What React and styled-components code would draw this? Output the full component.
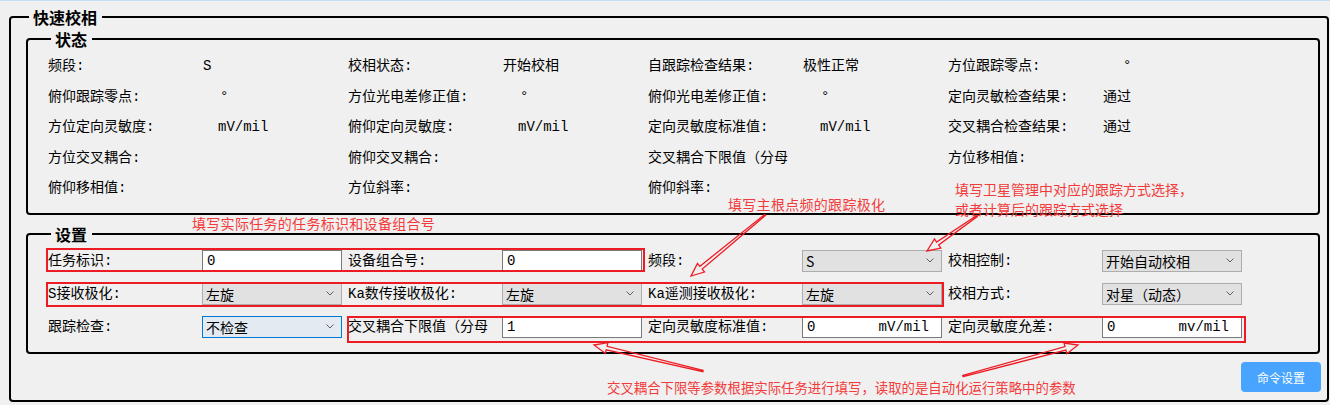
import React from 'react';
import styled, { createGlobalStyle } from 'styled-components';

const Global = createGlobalStyle`
  html, body { margin: 0; padding: 0; background: #f0f0f0; }
  body {
    font-family: "Liberation Mono", "Noto Sans CJK SC", monospace;
    font-size: 14px;
    color: #000;
  }
  * { box-sizing: border-box; }
`;

const Page = styled.div`
  position: relative;
  width: 1330px;
  height: 405px;
  overflow: hidden;
  background: #f0f0f0;
`;

const TopStrip = styled.div`
  height: 1px;
  background: #c6def3;
`;

const Group = styled.fieldset`
  margin: ${(p) => p.$margin || '0'};
  padding: ${(p) => p.$padding || '0'};
  width: ${(p) => (p.$width ? `${p.$width}px` : 'auto')};
  border: 2px solid #000;
  border-radius: 4px;
  min-width: 0;
`;

const Title = styled.legend`
  margin-left: 3px;
  padding: 0 5px 0 4px;
  font-family: "Noto Sans CJK SC", sans-serif;
  font-weight: 700;
  font-size: 16px;
  line-height: 18px;
`;

const StatusGrid = styled.div`
  display: grid;
  grid-template-columns: repeat(4, 155px 145px);
  grid-auto-rows: 30.5px;
  align-items: center;
`;

const StatusLabel = styled.span`
  white-space: pre;
  line-height: 18px;
`;

const StatusValue = styled.span`
  white-space: pre;
  line-height: 18px;
  padding-left: ${(p) => p.$indent || 0}px;
`;

const SettingsGrid = styled.div`
  display: grid;
  grid-template-columns: repeat(4, 154px 146px);
  grid-template-rows: repeat(3, 33px);
  align-items: center;
`;

const FieldLabel = styled.span`
  grid-column: ${(p) => p.$c};
  grid-row: ${(p) => p.$r};
  white-space: pre;
  line-height: 18px;
`;

const SelectBox = styled.div`
  grid-column: ${(p) => p.$c};
  grid-row: ${(p) => p.$r};
  width: 140px;
  height: 22px;
  display: flex;
  align-items: center;
  justify-content: space-between;
  padding: 0 7px 0 3px;
  background: ${(p) => (p.$focused ? '#e3eaf2' : '#e1e1e1')};
  border: 1px solid ${(p) => (p.$focused ? '#0078d7' : '#adadad')};
  font-family: "Noto Sans CJK SC", sans-serif;
  font-size: 14px;
  line-height: 20px;
  white-space: pre;
`;

const TextBox = styled.div`
  grid-column: ${(p) => p.$c};
  grid-row: ${(p) => p.$r};
  width: 140px;
  height: 22px;
  display: flex;
  align-items: center;
  justify-content: space-between;
  padding: 0 12px 0 4px;
  background: #fff;
  border: 1px solid #7a7a7a;
  line-height: 18px;
  white-space: pre;
`;

const Highlight = styled.div`
  grid-column: ${(p) => p.$cols};
  grid-row: ${(p) => p.$r};
  align-self: stretch;
  margin: ${(p) => p.$m};
  border: 2px solid #ed1c24;
  pointer-events: none;
  z-index: 1;
`;

const Footer = styled.div`
  display: flex;
  justify-content: flex-end;
  margin-top: 8px;
`;

const CommandButton = styled.button`
  width: 80px;
  height: 30px;
  margin-right: -1px;
  border: none;
  border-radius: 4px;
  background: #48a4fe;
  color: #fff;
  font-family: "Noto Sans CJK SC", sans-serif;
  font-size: 12px;
  padding: 0;
`;

const Overlay = styled.div`
  position: absolute;
  inset: 0;
  pointer-events: none;
`;

const ArrowLayer = styled.svg`
  position: absolute;
  left: 0;
  top: 0;
`;

const Note = styled.div`
  position: absolute;
  left: ${(p) => p.$x}px;
  top: ${(p) => p.$y}px;
  font-family: "Noto Sans CJK SC", sans-serif;
  font-size: ${(p) => p.$size || 14}px;
  letter-spacing: ${(p) => p.$ls || 0}px;
  line-height: ${(p) => p.$lh || 16}px;
  color: #f23c3c;
  white-space: pre;
`;

const Chevron = () => (
  <svg width="8" height="5" viewBox="0 0 8 5">
    <polyline points="0.5,0.5 4,4 7.5,0.5" fill="none" stroke="#606060" strokeWidth="1" />
  </svg>
);

const statusRows = [
  [['频段:', 'S', 0], ['校相状态:', '开始校相', 0], ['自跟踪检查结果:', '极性正常', 0], ['方位跟踪零点:', '°', 20]],
  [['俯仰跟踪零点:', '°', 17], ['方位光电差修正值:', '°', 17], ['俯仰光电差修正值:', '°', 18], ['定向灵敏检查结果:', '通过', 0]],
  [['方位定向灵敏度:', 'mV/mil', 15], ['俯仰定向灵敏度:', 'mV/mil', 15], ['定向灵敏度标准值:', 'mV/mil', 17], ['交叉耦合检查结果:', '通过', 0]],
  [['方位交叉耦合:', '', 0], ['俯仰交叉耦合:', '', 0], ['交叉耦合下限值（分母', '', 0], ['方位移相值:', '', 0]],
  [['俯仰移相值:', '', 0], ['方位斜率:', '', 0], ['俯仰斜率:', '', 0], ['', '', 0]],
];

const settingRows = [
  [
    { label: '任务标识:', kind: 'input', value: '0' },
    { label: '设备组合号:', kind: 'input', value: '0' },
    { label: '频段:', kind: 'select', value: 'S' },
    { label: '校相控制:', kind: 'select', value: '开始自动校相' },
  ],
  [
    { label: 'S接收极化:', kind: 'select', value: '左旋' },
    { label: 'Ka数传接收极化:', kind: 'select', value: '左旋' },
    { label: 'Ka遥测接收极化:', kind: 'select', value: '左旋' },
    { label: '校相方式:', kind: 'select', value: '对星（动态）' },
  ],
  [
    { label: '跟踪检查:', kind: 'select', value: '不检查', focused: true },
    { label: '交叉耦合下限值（分母', kind: 'input', value: '1' },
    { label: '定向灵敏度标准值:', kind: 'input', value: '0', unit: 'mV/mil' },
    { label: '定向灵敏度允差:', kind: 'input', value: '0', unit: 'mv/mil' },
  ],
];

const highlights = [
  { r: 1, cols: '1 / 5', m: '4px 3px 5px -2px' },
  { r: 2, cols: '1 / 7', m: '5px 4px 3px -2px' },
  { r: 3, cols: '3 / 9', m: '6px 2px 0 -1px' },
];

function arrowPoints(x1, y1, x2, y2) {
  const dx = x2 - x1;
  const dy = y2 - y1;
  const L = Math.hypot(dx, dy);
  const ux = dx / L;
  const uy = dy / L;
  const nx = -uy;
  const ny = ux;
  const hl = 13;
  const hw = 5.5;
  const sw = 1.8;
  const tw = 0.6;
  const bx = x2 - ux * hl;
  const by = y2 - uy * hl;
  const pts = [
    [x1 + nx * tw, y1 + ny * tw],
    [bx + nx * sw, by + ny * sw],
    [bx + nx * hw, by + ny * hw],
    [x2, y2],
    [bx - nx * hw, by - ny * hw],
    [bx - nx * sw, by - ny * sw],
    [x1 - nx * tw, y1 - ny * tw],
  ];
  return pts.map(([a, b]) => `${a.toFixed(1)},${b.toFixed(1)}`).join(' ');
}

const arrows = [
  [765, 215, 691, 276],
  [977, 216, 927, 251],
  [703, 371, 594, 345],
  [963, 376, 1078, 345],
];

export default function App() {
  return (
    <Page>
      <Global />
      <TopStrip />
      <Group $margin="7px 0 0 9px" $padding="4px 7px 8px 15px" $width={1320}>
        <Title>快速校相</Title>
        <Group $padding="3px 0 9.5px 20px">
          <Title>状态</Title>
          <StatusGrid>
            {statusRows.map((row, ri) =>
              row.map(([label, value, indent], ci) => (
                <React.Fragment key={`${ri}-${ci}`}>
                  <StatusLabel>{label}</StatusLabel>
                  <StatusValue $indent={indent}>{value}</StatusValue>
                </React.Fragment>
              ))
            )}
          </StatusGrid>
        </Group>
        <Group $margin="10px 0 0 0" $padding="1px 0 9px 20px">
          <Title>设置</Title>
          <SettingsGrid>
            {settingRows.map((row, ri) =>
              row.map((f, ci) => {
                const r = ri + 1;
                const lc = ci * 2 + 1;
                const cc = ci * 2 + 2;
                return (
                  <React.Fragment key={`${ri}-${ci}`}>
                    <FieldLabel $c={lc} $r={r}>{f.label}</FieldLabel>
                    {f.kind === 'select' ? (
                      <SelectBox $c={cc} $r={r} $focused={f.focused}>
                        <span>{f.value}</span>
                        <Chevron />
                      </SelectBox>
                    ) : (
                      <TextBox $c={cc} $r={r}>
                        <span>{f.value}</span>
                        {f.unit && <span>{f.unit}</span>}
                      </TextBox>
                    )}
                  </React.Fragment>
                );
              })
            )}
            {highlights.map((h, i) => (
              <Highlight key={i} $r={h.r} $cols={h.cols} $m={h.m} />
            ))}
          </SettingsGrid>
        </Group>
        <Footer>
          <CommandButton type="button">命令设置</CommandButton>
        </Footer>
      </Group>
      <Overlay>
        <ArrowLayer width="1330" height="405" viewBox="0 0 1330 405">
          {arrows.map((a, i) => (
            <polygon
              key={i}
              points={arrowPoints(...a)}
              fill="none"
              stroke="#ed1c24"
              strokeWidth="1.3"
              strokeLinejoin="miter"
            />
          ))}
        </ArrowLayer>
        <Note $x={192} $y={214.5} $ls={0.3}>填写实际任务的任务标识和设备组合号</Note>
        <Note $x={728} $y={195.5} $ls={0.3}>填写主根点频的跟踪极化</Note>
        <Note $x={955} $y={178.5} $lh={20}>{'填写卫星管理中对应的跟踪方式选择，\n或者计算后的跟踪方式选择'}</Note>
        <Note $x={607} $y={378.5} $size={13.4}>交叉耦合下限等参数根据实际任务进行填写，读取的是自动化运行策略中的参数</Note>
      </Overlay>
    </Page>
  );
}
